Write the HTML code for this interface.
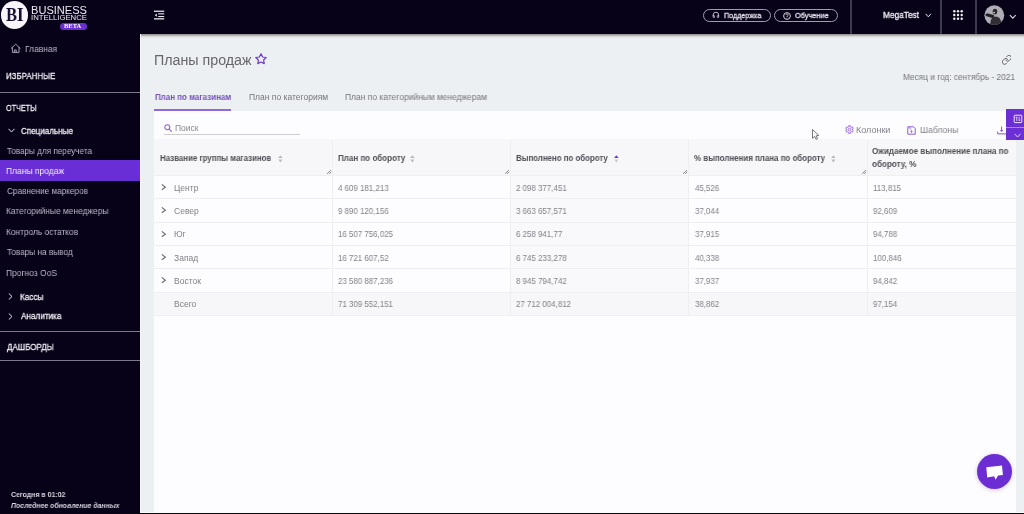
<!DOCTYPE html>
<html><head><meta charset="utf-8">
<style>
*{margin:0;padding:0;box-sizing:border-box}
html,body{width:1024px;height:514px;overflow:hidden;background:#080219;font-family:"Liberation Sans",sans-serif;line-height:1.15}
.abs{position:absolute;white-space:nowrap}
.t{will-change:transform}
.sep{position:absolute;left:0;width:140px;height:1px;background:#7f7792}
.col{position:absolute;top:139px;height:177px;width:1px;background:#efeef1}
.hrow{position:absolute;left:154px;width:862px;height:1px;background:#efeef1}
.pill{position:absolute;border:1px solid #a39cb0;border-radius:7px}
.vsep{position:absolute;top:0;width:2px;height:34px;background:#3f3a4d}
</style></head><body>
<div class="abs" style="left:140px;top:34px;width:884px;height:478px;background:#ecf0f2"></div>
<div class="abs" style="left:140px;top:34px;width:1px;height:478px;background:#f6f6f8"></div>
<div class="abs" style="left:141px;top:34px;width:883px;height:6px;background:linear-gradient(#9a9599 0px,#9d999c 1px,#b5b3b5 1px,#b5b3b5 2px,#d6d7d9 2px,#d8d9db 3px,#e4e5e7 3px,#e6e7e9 4px,#eaebed 4px,#ebedef 5px,#eceff1 5px)"></div>
<div class="abs" style="left:0.5px;top:1.4px;width:27.8px;height:27.9px;border-radius:50%;background:#f8f6fa"></div>
<div class="abs" style="left:60px;top:22.5px;width:26.5px;height:7px;border-radius:3.5px;background:#6b2fd0"></div>
<div id="l_bi" class="abs t" style="left:5.80px;top:4.00px;font-size:19px;color:#140c2c;font-weight:bold;font-family:'Liberation Serif',serif;transform:scaleX(0.8650);transform-origin:0 0">BI</div>
<div id="l_bus" class="abs t" style="left:31.28px;top:5.00px;font-size:10px;color:#ece9f0;transform:scaleX(1.1074);transform-origin:0 0">BUSINESS</div>
<div id="l_int" class="abs t" style="left:31.28px;top:14.00px;font-size:7.4px;color:#ece9f0;transform:scaleX(1.0486);transform-origin:0 0">INTELLIGENCE</div>
<div id="l_beta" class="abs t" style="left:64.42px;top:21.50px;font-size:6.5px;color:#ffffff;font-weight:bold;font-family:'Liberation Serif',serif;transform:scaleX(0.9830);transform-origin:0 0">BETA</div>
<svg class="abs" style="left:6px;top:40px" width="20" height="16" viewBox="0 0 20 16"><path d="M5.2 8.4 L9.7 4.2 L14.2 8.4 M6.4 7.4 V12.4 H13 V7.4 M8.4 12.4 V9.9 H10.2 V12.4" fill="none" stroke="#aaa3bd" stroke-width="0.95" stroke-linejoin="round" stroke-linecap="round"/></svg>
<div class="sep" style="top:92px"></div>
<svg class="abs" style="left:7.5px;top:128px" width="7" height="5" viewBox="0 0 7 5"><path d="M0.5 0.8 L3.5 4 L6.5 0.8" fill="none" stroke="#e8e6ec" stroke-width="1"/></svg>
<div class="abs" style="left:0;top:160px;width:140px;height:20.5px;background:#6a2ed6"></div>
<svg class="abs" style="left:8px;top:292.5px" width="5" height="7" viewBox="0 0 5 7"><path d="M0.8 0.5 L4 3.5 L0.8 6.5" fill="none" stroke="#e8e6ec" stroke-width="1"/></svg>
<svg class="abs" style="left:8px;top:313px" width="5" height="7" viewBox="0 0 5 7"><path d="M0.8 0.5 L4 3.5 L0.8 6.5" fill="none" stroke="#e8e6ec" stroke-width="1"/></svg>
<div class="sep" style="top:331px"></div>
<div class="sep" style="top:359.5px"></div>
<div id="s_home" class="abs t" style="left:24.86px;top:44.00px;font-size:9.5px;color:#bcb6c8;transform:scaleX(0.8890);transform-origin:0 0">Главная</div>
<div id="s_fav" class="abs t" style="left:5.64px;top:70.50px;font-size:9.5px;color:#f0eef3;transform:scaleX(0.8322);transform-origin:0 0;-webkit-text-stroke:0.3px #f0eef3">ИЗБРАННЫЕ</div>
<div id="s_rep" class="abs t" style="left:6.44px;top:103.00px;font-size:9.5px;color:#f0eef3;transform:scaleX(0.7613);transform-origin:0 0;-webkit-text-stroke:0.3px #f0eef3">ОТЧЕТЫ</div>
<div id="s_spec" class="abs t" style="left:21.00px;top:126.00px;font-size:9.5px;color:#f0eef3;transform:scaleX(0.8481);transform-origin:0 0;-webkit-text-stroke:0.3px #f0eef3">Специальные</div>
<div id="s_i1" class="abs t" style="left:7.00px;top:145.50px;font-size:9.5px;color:#bcb6c8;transform:scaleX(0.8557);transform-origin:0 0">Товары для переучета</div>
<div id="s_i2" class="abs t" style="left:6.20px;top:165.50px;font-size:9.5px;color:#f1eef8;transform:scaleX(0.8938);transform-origin:0 0">Планы продаж</div>
<div id="s_i3" class="abs t" style="left:7.00px;top:186.00px;font-size:9.5px;color:#bcb6c8;transform:scaleX(0.8644);transform-origin:0 0">Сравнение маркеров</div>
<div id="s_i4" class="abs t" style="left:6.20px;top:206.00px;font-size:9.5px;color:#bcb6c8;transform:scaleX(0.8825);transform-origin:0 0">Категорийные менеджеры</div>
<div id="s_i5" class="abs t" style="left:6.20px;top:227.00px;font-size:9.5px;color:#bcb6c8;transform:scaleX(0.8762);transform-origin:0 0">Контроль остатков</div>
<div id="s_i6" class="abs t" style="left:7.00px;top:246.50px;font-size:9.5px;color:#bcb6c8;transform:scaleX(0.8641);transform-origin:0 0">Товары на вывод</div>
<div id="s_i7" class="abs t" style="left:6.20px;top:267.50px;font-size:9.5px;color:#bcb6c8;transform:scaleX(0.8898);transform-origin:0 0">Прогноз OoS</div>
<div id="s_kassy" class="abs t" style="left:20.20px;top:292.00px;font-size:9.5px;color:#f0eef3;transform:scaleX(0.8653);transform-origin:0 0;-webkit-text-stroke:0.3px #f0eef3">Кассы</div>
<div id="s_anal" class="abs t" style="left:21.00px;top:311.00px;font-size:9.5px;color:#f0eef3;transform:scaleX(0.8595);transform-origin:0 0;-webkit-text-stroke:0.3px #f0eef3">Аналитика</div>
<div id="s_dash" class="abs t" style="left:6.60px;top:342.00px;font-size:9.5px;color:#f0eef3;transform:scaleX(0.8417);transform-origin:0 0;-webkit-text-stroke:0.3px #f0eef3">ДАШБОРДЫ</div>
<div id="s_today" class="abs t" style="left:10.96px;top:491.00px;font-size:7.5px;color:#d9d6de;font-weight:bold;transform:scaleX(0.9248);transform-origin:0 0">Сегодня в 01:02</div>
<div id="s_last" class="abs t" style="left:10.96px;top:502.00px;font-size:7.5px;color:#d9d6de;font-weight:bold;font-style:italic;transform:scaleX(0.9189);transform-origin:0 0">Последнее обновление данных</div>
<svg class="abs" style="left:154px;top:10px" width="11" height="10" viewBox="0 0 11 10"><rect x="0" y="0.6" width="10.2" height="1.3" fill="#e9e6ef"/><rect x="4.2" y="3.3" width="6" height="1.1" fill="#e9e6ef"/><rect x="4.2" y="6" width="6" height="1.1" fill="#e9e6ef"/><path d="M0.8 5.2 L2.8 3.6 V6.8 Z" fill="#f2f0f5"/><rect x="0" y="8.2" width="10.2" height="1.3" fill="#e9e6ef"/></svg>
<div class="pill" style="left:702.5px;top:9px;width:68px;height:12.5px"></div>
<svg class="abs" style="left:712px;top:11px" width="8" height="8" viewBox="0 0 8 8"><path d="M1.1 5.2 V4 A2.8 2.8 0 0 1 6.7 4 V5.2" fill="none" stroke="#cdc8d6" stroke-width="0.9"/><rect x="1.1" y="4.5" width="1.4" height="2.1" rx="0.4" fill="none" stroke="#cdc8d6" stroke-width="0.8"/><rect x="5.3" y="4.5" width="1.4" height="2.1" rx="0.4" fill="none" stroke="#cdc8d6" stroke-width="0.8"/></svg>
<div class="pill" style="left:774px;top:9px;width:64px;height:12.5px"></div>
<svg class="abs" style="left:783px;top:11.5px" width="8" height="8" viewBox="0 0 8 8"><circle cx="4" cy="4" r="3.4" fill="none" stroke="#e9e6ef" stroke-width="0.9"/><path d="M2.9 3.1 A1.1 1.1 0 1 1 4.4 4.1 L4 4.6 V5" fill="none" stroke="#e9e6ef" stroke-width="0.8"/><circle cx="4" cy="6" r="0.45" fill="#e9e6ef"/></svg>
<div class="vsep" style="left:849.6px"></div>
<svg class="abs" style="left:924.5px;top:12.8px" width="7" height="5" viewBox="0 0 7 5"><path d="M0.6 0.8 L3.3 3.8 L6 0.8" fill="none" stroke="#e9e6ef" stroke-width="1"/></svg>
<div class="vsep" style="left:940.2px"></div>
<svg class="abs" style="left:953px;top:10px" width="10" height="10" viewBox="0 0 10 10" fill="#f1eff4"><circle cx="1.3" cy="1.3" r="1.2"/><circle cx="5" cy="1.3" r="1.2"/><circle cx="8.7" cy="1.3" r="1.2"/><circle cx="1.3" cy="5" r="1.2"/><circle cx="5" cy="5" r="1.2"/><circle cx="8.7" cy="5" r="1.2"/><circle cx="1.3" cy="8.7" r="1.2"/><circle cx="5" cy="8.7" r="1.2"/><circle cx="8.7" cy="8.7" r="1.2"/></svg>
<div class="vsep" style="left:974.6px"></div>
<svg class="abs" style="left:984px;top:5px" width="21" height="21" viewBox="0 0 21 21"><defs><clipPath id="av"><circle cx="10.3" cy="10.2" r="9.9"/></clipPath></defs><circle cx="10.3" cy="10.2" r="9.9" fill="#aeadb4"/><g clip-path="url(#av)"><path d="M5.5 22 L7 14.5 L9 12.2 L12.5 11.4 L15.5 13 L17.5 17 L18.5 22 Z" fill="#312e36"/><path d="M1.2 9.8 L3 8.2 L9.8 10 L10.5 12.4 L8.2 13 L2 11 Z" fill="#231f28"/><ellipse cx="11" cy="6.6" rx="2.3" ry="2.9" fill="#2a2530"/><circle cx="10.2" cy="7.6" r="0.9" fill="#d8c2a8"/><circle cx="13.6" cy="8.6" r="0.8" fill="#c9b199"/><circle cx="7.6" cy="8.4" r="0.7" fill="#c9b199"/></g></svg>
<svg class="abs" style="left:1008.5px;top:13.5px" width="8" height="6" viewBox="0 0 8 6"><path d="M0.8 1 L3.8 4.2 L6.8 1" fill="none" stroke="#e9e6ef" stroke-width="1.05"/></svg>
<div id="h_sup" class="abs t" style="left:724.00px;top:11.00px;font-size:8px;color:#e2dee8;transform:scaleX(0.8961);transform-origin:0 0;-webkit-text-stroke:0.3px #e2dee8">Поддержка</div>
<div id="h_edu" class="abs t" style="left:795.32px;top:11.00px;font-size:8px;color:#e2dee8;transform:scaleX(0.9160);transform-origin:0 0;-webkit-text-stroke:0.3px #e2dee8">Обучение</div>
<div id="h_mega" class="abs t" style="left:883.38px;top:9.50px;font-size:9px;color:#f1eff4;transform:scaleX(0.9232);transform-origin:0 0;-webkit-text-stroke:0.3px #f1eff4">MegaTest</div>
<svg class="abs" style="left:255.4px;top:53.2px" width="12" height="12" viewBox="0 0 12 12"><path d="M6.00 0.70 L7.62 3.98 L11.23 4.50 L8.62 7.05 L9.23 10.65 L6.00 8.95 L2.77 10.65 L3.38 7.05 L0.77 4.50 L4.38 3.98 Z" fill="none" stroke="#6f3bcf" stroke-width="1.2" stroke-linejoin="round"/></svg>
<svg class="abs" style="left:1001.6px;top:55px" width="9.6" height="9.6" viewBox="1.5 1.5 21 21"><path d="M10 13a5 5 0 0 0 7.54.54l3-3a5 5 0 0 0-7.07-7.07l-1.72 1.71 M14 11a5 5 0 0 0-7.54-.54l-3 3a5 5 0 0 0 7.07 7.07l1.71-1.71" fill="none" stroke="#605e66" stroke-width="2.1" stroke-linecap="round" stroke-linejoin="round"/></svg>
<div class="abs" style="left:154px;top:109px;width:77px;height:2px;background:#9069d6"></div>
<div class="abs" style="left:154px;top:111px;width:862px;height:401px;background:#fdfcfe"></div>
<svg class="abs" style="left:163.6px;top:123.5px" width="9" height="9" viewBox="0 0 9 9"><circle cx="3.3" cy="3.2" r="2.5" fill="none" stroke="#8a5fd8" stroke-width="1.05"/><path d="M5.1 5.1 L7.4 7.3" stroke="#8a5fd8" stroke-width="1.15" stroke-linecap="round"/></svg>
<div class="abs" style="left:163.8px;top:134px;width:136.2px;height:1px;background:#cdccd1"></div>
<svg class="abs" style="left:844.5px;top:125px" width="9" height="9" viewBox="0 0 9 9"><path d="M3.56 0.72 L5.44 0.72 L5.40 1.74 L6.44 2.34 L7.31 1.79 L8.25 3.43 L7.34 3.90 L7.34 5.10 L8.25 5.57 L7.31 7.21 L6.44 6.66 L5.40 7.26 L5.44 8.28 L3.56 8.28 L3.60 7.26 L2.56 6.66 L1.69 7.21 L0.75 5.57 L1.66 5.10 L1.66 3.90 L0.75 3.43 L1.69 1.79 L2.56 2.34 L3.60 1.74 Z" fill="none" stroke="#9364db" stroke-width="0.9" stroke-linejoin="round"/><circle cx="4.5" cy="4.5" r="1.3" fill="none" stroke="#9364db" stroke-width="0.9"/></svg>
<svg class="abs" style="left:907px;top:125.5px" width="9" height="9" viewBox="0 0 9 9"><path d="M0.8 0.8 H6.4 L8.2 2.6 V8.2 H0.8 Z" fill="none" stroke="#8c5bd8" stroke-width="1"/><path d="M2.8 0.9 V2.4 L4.3 3.4 M4.5 4.2 V6.4 M3.4 5.4 L4.5 6.5 L5.6 5.4" fill="none" stroke="#8c5bd8" stroke-width="0.8"/></svg>
<svg class="abs" style="left:996.5px;top:125.5px" width="10" height="9" viewBox="0 0 10 9"><path d="M4.6 0.6 V5.2 M3.3 4 L4.6 5.4 L5.9 4 M0.7 5.6 V7.9 H9.3" fill="none" stroke="#7b4ccc" stroke-width="0.95"/></svg>
<div id="c_title" class="abs t" style="left:154.32px;top:51.50px;font-size:14px;color:#67656c;transform:scaleX(1.0179);transform-origin:0 0">Планы продаж</div>
<div id="c_month" class="abs t" style="left:903.28px;top:71.50px;font-size:9px;color:#75737a;transform:scaleX(0.9200);transform-origin:0 0">Месяц и год: сентябрь - 2021</div>
<div id="c_tab1" class="abs t" style="left:154.64px;top:93.00px;font-size:8.5px;color:#7650c0;font-weight:bold;transform:scaleX(0.9369);transform-origin:0 0">План по магазинам</div>
<div id="c_tab2" class="abs t" style="left:248.64px;top:93.00px;font-size:8.5px;color:#77757c;transform:scaleX(0.9949);transform-origin:0 0">План по категориям</div>
<div id="c_tab3" class="abs t" style="left:345.28px;top:93.00px;font-size:8.5px;color:#77757c;transform:scaleX(0.9945);transform-origin:0 0">План по категорийным менеджерам</div>
<div id="c_search" class="abs t" style="left:174.70px;top:123.50px;font-size:8.5px;color:#8a8890">Поиск</div>
<div id="c_cols" class="abs t" style="left:856.38px;top:125.00px;font-size:9px;color:#85838a;transform:scaleX(0.9859);transform-origin:0 0">Колонки</div>
<div id="c_tpl" class="abs t" style="left:920.20px;top:125.00px;font-size:9px;color:#85838a;transform:scaleX(0.9661);transform-origin:0 0">Шаблоны</div>
<div class="abs" style="left:154px;top:139px;width:862px;height:36px;background:#f7f6f8"></div>
<div class="abs" style="left:510px;top:175px;width:178px;height:117px;background:#f9f8fa"></div>
<div class="abs" style="left:154px;top:292px;width:862px;height:23.35px;background:#f7f6f8"></div>
<div class="abs" style="left:1016px;top:139px;width:8px;height:373px;background:#ecf0f2"></div>
<div class="col" style="left:332px"></div>
<div class="col" style="left:510px"></div>
<div class="col" style="left:688px"></div>
<div class="col" style="left:867px"></div>
<div class="hrow" style="top:175.00px"></div>
<div class="hrow" style="top:198.35px"></div>
<div class="hrow" style="top:221.70px"></div>
<div class="hrow" style="top:245.05px"></div>
<div class="hrow" style="top:268.40px"></div>
<div class="hrow" style="top:291.75px"></div>
<div class="hrow" style="top:315.10px"></div>
<svg class="abs" style="left:277.6px;top:154.5px" width="5" height="8" viewBox="0 0 5 8"><path d="M0.1 3.1 L2.35 0.2 L4.6 3.1 Z" fill="#b9b7bd"/><path d="M0.4 4.5 L2.35 7.4 L4.3 4.5 Z" fill="#b9b7bd"/></svg>
<svg class="abs" style="left:410.2px;top:154.5px" width="5" height="8" viewBox="0 0 5 8"><path d="M0.1 3.1 L2.35 0.2 L4.6 3.1 Z" fill="#b9b7bd"/><path d="M0.4 4.5 L2.35 7.4 L4.3 4.5 Z" fill="#b9b7bd"/></svg>
<svg class="abs" style="left:613.8px;top:154.5px" width="5" height="8" viewBox="0 0 5 8"><path d="M0.1 3.1 L2.35 0.2 L4.6 3.1 Z" fill="#6c35cc"/><path d="M0.4 4.5 L2.35 7.4 L4.3 4.5 Z" fill="#c9c7cc"/></svg>
<svg class="abs" style="left:831px;top:154.5px" width="5" height="8" viewBox="0 0 5 8"><path d="M0.1 3.1 L2.35 0.2 L4.6 3.1 Z" fill="#b9b7bd"/><path d="M0.4 4.5 L2.35 7.4 L4.3 4.5 Z" fill="#b9b7bd"/></svg>
<svg class="abs" style="left:326px;top:169px" width="6" height="6" viewBox="0 0 6 6"><path d="M1 4.8 L5 1 M3.2 4.8 L5.2 2.9" stroke="#76747b" stroke-width="0.85"/></svg>
<svg class="abs" style="left:504px;top:169px" width="6" height="6" viewBox="0 0 6 6"><path d="M1 4.8 L5 1 M3.2 4.8 L5.2 2.9" stroke="#76747b" stroke-width="0.85"/></svg>
<svg class="abs" style="left:682px;top:169px" width="6" height="6" viewBox="0 0 6 6"><path d="M1 4.8 L5 1 M3.2 4.8 L5.2 2.9" stroke="#76747b" stroke-width="0.85"/></svg>
<svg class="abs" style="left:861px;top:169px" width="6" height="6" viewBox="0 0 6 6"><path d="M1 4.8 L5 1 M3.2 4.8 L5.2 2.9" stroke="#76747b" stroke-width="0.85"/></svg>
<div id="th0" class="abs t" style="left:159.98px;top:153.50px;font-size:8.5px;color:#504e56;font-weight:bold;transform:scaleX(0.9275);transform-origin:0 0">Название группы магазинов</div>
<div id="th1" class="abs t" style="left:337.98px;top:153.50px;font-size:8.5px;color:#504e56;font-weight:bold;transform:scaleX(0.9449);transform-origin:0 0">План по обороту</div>
<div id="th2" class="abs t" style="left:516.08px;top:153.50px;font-size:8.5px;color:#504e56;font-weight:bold;transform:scaleX(0.9268);transform-origin:0 0">Выполнено по обороту</div>
<div id="th3" class="abs t" style="left:694.10px;top:153.50px;font-size:8.5px;color:#504e56;font-weight:bold;transform:scaleX(0.9325);transform-origin:0 0">% выполнения плана по обороту</div>
<div id="th4a" class="abs t" style="left:871.70px;top:146.50px;font-size:8.5px;color:#504e56;font-weight:bold;transform:scaleX(0.9464);transform-origin:0 0">Ожидаемое выполнение плана по</div>
<div id="th4b" class="abs t" style="left:871.70px;top:160.00px;font-size:8.5px;color:#504e56;font-weight:bold;transform:scaleX(0.9527);transform-origin:0 0">обороту, %</div>
<svg class="abs" style="left:160.5px;top:184.00px" width="6" height="7" viewBox="0 0 6 7"><path d="M0.8 0.4 L4.4 3.3 L0.8 5.8" fill="none" stroke="#68666d" stroke-width="1.05"/></svg>
<svg class="abs" style="left:160.5px;top:207.35px" width="6" height="7" viewBox="0 0 6 7"><path d="M0.8 0.4 L4.4 3.3 L0.8 5.8" fill="none" stroke="#68666d" stroke-width="1.05"/></svg>
<svg class="abs" style="left:160.5px;top:230.70px" width="6" height="7" viewBox="0 0 6 7"><path d="M0.8 0.4 L4.4 3.3 L0.8 5.8" fill="none" stroke="#68666d" stroke-width="1.05"/></svg>
<svg class="abs" style="left:160.5px;top:254.05px" width="6" height="7" viewBox="0 0 6 7"><path d="M0.8 0.4 L4.4 3.3 L0.8 5.8" fill="none" stroke="#68666d" stroke-width="1.05"/></svg>
<svg class="abs" style="left:160.5px;top:277.40px" width="6" height="7" viewBox="0 0 6 7"><path d="M0.8 0.4 L4.4 3.3 L0.8 5.8" fill="none" stroke="#68666d" stroke-width="1.05"/></svg>
<div id="td00" class="abs t" style="left:173.92px;top:183.50px;font-size:8.5px;color:#828088;transform:scaleX(1.0019);transform-origin:0 0">Центр</div>
<div id="td01" class="abs t" style="left:337.50px;top:183.50px;font-size:8.5px;color:#828088;transform:scaleX(0.9313);transform-origin:0 0">4 609 181,213</div>
<div id="td02" class="abs t" style="left:516.00px;top:183.50px;font-size:8.5px;color:#828088;transform:scaleX(0.9313);transform-origin:0 0">2 098 377,451</div>
<div id="td03" class="abs t" style="left:694.50px;top:183.50px;font-size:8.5px;color:#828088;transform:scaleX(0.9313);transform-origin:0 0">45,526</div>
<div id="td04" class="abs t" style="left:872.50px;top:183.50px;font-size:8.5px;color:#828088;transform:scaleX(0.9313);transform-origin:0 0">113,815</div>
<div id="td10" class="abs t" style="left:173.92px;top:206.85px;font-size:8.5px;color:#828088;transform:scaleX(1.0019);transform-origin:0 0">Север</div>
<div id="td11" class="abs t" style="left:337.50px;top:206.85px;font-size:8.5px;color:#828088;transform:scaleX(0.9313);transform-origin:0 0">9 890 120,156</div>
<div id="td12" class="abs t" style="left:516.00px;top:206.85px;font-size:8.5px;color:#828088;transform:scaleX(0.9313);transform-origin:0 0">3 663 657,571</div>
<div id="td13" class="abs t" style="left:694.50px;top:206.85px;font-size:8.5px;color:#828088;transform:scaleX(0.9313);transform-origin:0 0">37,044</div>
<div id="td14" class="abs t" style="left:872.50px;top:206.85px;font-size:8.5px;color:#828088;transform:scaleX(0.9313);transform-origin:0 0">92,609</div>
<div id="td20" class="abs t" style="left:173.92px;top:230.20px;font-size:8.5px;color:#828088;transform:scaleX(1.0019);transform-origin:0 0">Юг</div>
<div id="td21" class="abs t" style="left:337.50px;top:230.20px;font-size:8.5px;color:#828088;transform:scaleX(0.9313);transform-origin:0 0">16 507 756,025</div>
<div id="td22" class="abs t" style="left:516.00px;top:230.20px;font-size:8.5px;color:#828088;transform:scaleX(0.9313);transform-origin:0 0">6 258 941,77</div>
<div id="td23" class="abs t" style="left:694.50px;top:230.20px;font-size:8.5px;color:#828088;transform:scaleX(0.9313);transform-origin:0 0">37,915</div>
<div id="td24" class="abs t" style="left:872.50px;top:230.20px;font-size:8.5px;color:#828088;transform:scaleX(0.9313);transform-origin:0 0">94,788</div>
<div id="td30" class="abs t" style="left:173.92px;top:253.55px;font-size:8.5px;color:#828088;transform:scaleX(1.0019);transform-origin:0 0">Запад</div>
<div id="td31" class="abs t" style="left:337.50px;top:253.55px;font-size:8.5px;color:#828088;transform:scaleX(0.9313);transform-origin:0 0">16 721 607,52</div>
<div id="td32" class="abs t" style="left:516.00px;top:253.55px;font-size:8.5px;color:#828088;transform:scaleX(0.9313);transform-origin:0 0">6 745 233,278</div>
<div id="td33" class="abs t" style="left:694.50px;top:253.55px;font-size:8.5px;color:#828088;transform:scaleX(0.9313);transform-origin:0 0">40,338</div>
<div id="td34" class="abs t" style="left:872.50px;top:253.55px;font-size:8.5px;color:#828088;transform:scaleX(0.9313);transform-origin:0 0">100,846</div>
<div id="td40" class="abs t" style="left:173.92px;top:276.90px;font-size:8.5px;color:#828088;transform:scaleX(1.0019);transform-origin:0 0">Восток</div>
<div id="td41" class="abs t" style="left:337.50px;top:276.90px;font-size:8.5px;color:#828088;transform:scaleX(0.9313);transform-origin:0 0">23 580 887,236</div>
<div id="td42" class="abs t" style="left:516.00px;top:276.90px;font-size:8.5px;color:#828088;transform:scaleX(0.9313);transform-origin:0 0">8 945 794,742</div>
<div id="td43" class="abs t" style="left:694.50px;top:276.90px;font-size:8.5px;color:#828088;transform:scaleX(0.9313);transform-origin:0 0">37,937</div>
<div id="td44" class="abs t" style="left:872.50px;top:276.90px;font-size:8.5px;color:#828088;transform:scaleX(0.9313);transform-origin:0 0">94,842</div>
<div id="td50" class="abs t" style="left:173.92px;top:300.25px;font-size:8.5px;color:#828088;transform:scaleX(1.0019);transform-origin:0 0">Всего</div>
<div id="td51" class="abs t" style="left:337.50px;top:300.25px;font-size:8.5px;color:#828088;transform:scaleX(0.9313);transform-origin:0 0">71 309 552,151</div>
<div id="td52" class="abs t" style="left:516.00px;top:300.25px;font-size:8.5px;color:#828088;transform:scaleX(0.9313);transform-origin:0 0">27 712 004,812</div>
<div id="td53" class="abs t" style="left:694.50px;top:300.25px;font-size:8.5px;color:#828088;transform:scaleX(0.9313);transform-origin:0 0">38,862</div>
<div id="td54" class="abs t" style="left:872.50px;top:300.25px;font-size:8.5px;color:#828088;transform:scaleX(0.9313);transform-origin:0 0">97,154</div>
<div class="abs" style="left:1005.7px;top:109px;width:18.3px;height:31px;background:#6c2fd6"></div>
<div class="abs" style="left:1005.7px;top:127.2px;width:18.3px;height:1.2px;background:#a98ae6"></div>
<svg class="abs" style="left:1013px;top:114px" width="10" height="10" viewBox="0 0 10 10"><rect x="1.2" y="1.2" width="7.6" height="7.4" rx="0.8" fill="none" stroke="#f3eefc" stroke-width="0.95"/><path d="M3.8 2.8 V7 M2.7 4 L3.8 2.8 M6.2 2.8 V7 L7.3 5.8" fill="none" stroke="#f3eefc" stroke-width="0.8"/></svg>
<svg class="abs" style="left:1014px;top:132.5px" width="8" height="5" viewBox="0 0 8 5"><path d="M0.6 0.8 L3.6 4 L6.6 0.8" fill="none" stroke="#e9e0fa" stroke-width="0.95"/></svg>
<svg class="abs" style="left:812px;top:129px" width="8" height="11" viewBox="0 0 8 11"><path d="M0.5 0.5 V9.3 L2.6 7.4 L4.1 10.4 L5.5 9.8 L4.1 6.8 L6.9 6.6 Z" fill="#fdfcfe" stroke="#55535a" stroke-width="0.8" stroke-linejoin="round"/></svg>
<div class="abs" style="left:977.3px;top:454.2px;width:35.2px;height:35.2px;border-radius:50%;background:#6c2ed2;box-shadow:0 1px 4px rgba(80,40,140,0.25)"></div>
<svg class="abs" style="left:985px;top:463px" width="20" height="18" viewBox="0 0 20 18"><path d="M1.3 4.2 L17 2.5 L17.9 11.9 L13 12.6 L10.6 16.8 L9.2 13.3 L2.2 14.5 Z" fill="#fff"/></svg>
<div class="abs" style="left:140px;top:512px;width:884px;height:1px;background:#fafafb"></div>
<div class="abs" style="left:0;top:513px;width:1024px;height:1px;background:#0a0a0c"></div>
</body></html>
